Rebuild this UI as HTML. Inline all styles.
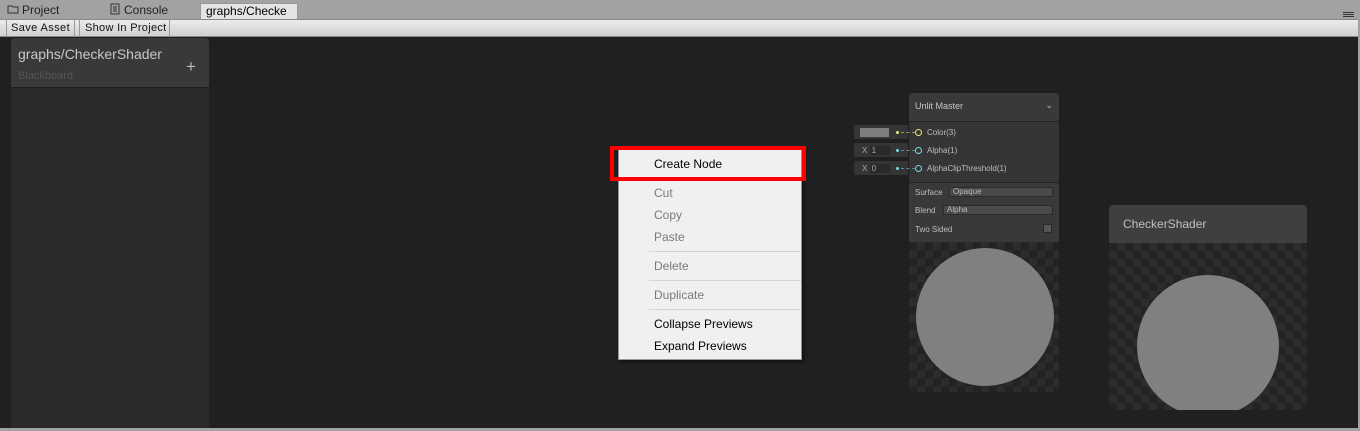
<!DOCTYPE html><html><head><style>
*{margin:0;padding:0;box-sizing:border-box}
body{width:1360px;height:431px;overflow:hidden;background:#a2a2a2;font-family:"Liberation Sans","DejaVu Sans",sans-serif;position:relative}
.a{position:absolute}
.t{font-size:12px;color:#000}
.chk{background-color:#232323;background-image:linear-gradient(45deg,#2c2c2c 25%,transparent 25%,transparent 75%,#2c2c2c 75%),linear-gradient(45deg,#2c2c2c 25%,transparent 25%,transparent 75%,#2c2c2c 75%);background-size:16px 16px;background-position:0 0,8px 8px;overflow:hidden}
.m{position:absolute;left:35px;font-size:12px;color:#000}
.d{color:#7a7a7a}
.sep{position:absolute;left:30px;width:152px;height:1px;background:#d5d5d5}
.nt{font-size:8px;color:#bdbdbd;position:absolute}
</style></head><body>
<svg class="a" style="left:7px;top:4px" width="12" height="10"><path d="M1 2h4l1 1h5v6H1z" fill="none" stroke="#333"/></svg>
<div class="a t" style="left:22px;top:3px;color:#222">Project</div>
<svg class="a" style="left:110px;top:3px" width="10" height="12"><rect x="1" y="1" width="8" height="10" fill="none" stroke="#333"/><path d="M3 4h4M3 6h4M3 8h4" stroke="#333"/></svg>
<div class="a t" style="left:124px;top:3px;color:#222">Console</div>
<div class="a" style="left:200px;top:3px;width:98px;height:17px;background:#e4e4e4;border:1px solid #999;border-bottom:none"></div>
<div class="a t" style="left:206px;top:4px;font-size:12px">graphs/Checke</div>
<div class="a" style="left:1343px;top:12px;width:11px;height:1px;background:#333;box-shadow:0 2px #333,0 4px #333"></div>
<div class="a" style="left:0;top:19px;width:1358px;height:18px;background:linear-gradient(#ececec,#cfcfcf);border-top:1px solid #888;border-bottom:1px solid #888"></div>
<div class="a" style="left:6px;top:19px;width:69px;height:18px;border-left:1px solid #999;border-right:1px solid #999"></div>
<div class="a" style="left:79px;top:19px;width:91px;height:18px;border-left:1px solid #999;border-right:1px solid #999"></div>
<div class="a" style="left:11px;top:22px;font-size:11px;letter-spacing:.4px;color:#111">Save Asset</div>
<div class="a" style="left:85px;top:22px;font-size:11px;letter-spacing:.3px;color:#111">Show In Project</div>
<div class="a" style="left:0;top:37px;width:1358px;height:391px;background:#202020"></div>
<div class="a" style="left:11px;top:38px;width:198px;height:390px;background:#2b2b2b;border-radius:4px 4px 0 0"></div>
<div class="a" style="left:11px;top:38px;width:198px;height:50px;background:#393939;border-radius:4px 4px 0 0;border-bottom:1px solid #1e1e1e"></div>
<div class="a" style="left:18px;top:46px;font-size:14px;color:#c8c8c8">graphs/CheckerShader</div>
<div class="a" style="left:18px;top:70px;font-size:11px;color:#555">Blackboard</div>
<div class="a" style="left:186px;top:57px;font-size:17px;color:#bbb">+</div>
<!-- master node -->
<div class="a" style="left:908px;top:92px;width:152px;height:301px;background:#393939;border-radius:4px;border:1px solid #1e1e1e;overflow:hidden">
<div class="nt" style="left:6px;top:8px;font-size:9px;color:#c4c4c4">Unlit Master</div>
<div class="nt" style="right:6px;top:7px;font-size:9px">&#8964;</div>
<div class="a" style="left:0;top:28px;width:152px;height:1px;background:#222"></div>
<div class="a" style="left:0;top:29px;width:152px;height:60px;background:#353535"></div>
<div class="nt" style="left:18px;top:35px">Color(3)</div>
<div class="nt" style="left:18px;top:53px">Alpha(1)</div>
<div class="nt" style="left:18px;top:71px">AlphaClipThreshold(1)</div>
<div class="a" style="left:6px;top:36px;width:7px;height:7px;border-radius:50%;border:1px solid #e6e67a"></div>
<div class="a" style="left:6px;top:54px;width:7px;height:7px;border-radius:50%;border:1px solid #79d8e2"></div>
<div class="a" style="left:6px;top:72px;width:7px;height:7px;border-radius:50%;border:1px solid #79d8e2"></div>
<div class="a" style="left:0;top:89px;width:152px;height:1px;background:#222"></div>
<div class="nt" style="left:6px;top:95px">Surface</div>
<div class="a" style="left:40px;top:94px;width:104px;height:10px;background:#4a4a4a;border:1px solid #2a2a2a;border-radius:2px;font-size:8px;color:#bbb;padding-left:3px;line-height:8px">Opaque</div>
<div class="nt" style="left:6px;top:113px">Blend</div>
<div class="a" style="left:34px;top:112px;width:110px;height:10px;background:#4a4a4a;border:1px solid #2a2a2a;border-radius:2px;font-size:8px;color:#bbb;padding-left:3px;line-height:8px">Alpha</div>
<div class="nt" style="left:6px;top:132px">Two Sided</div>
<div class="a" style="left:134px;top:131px;width:9px;height:9px;background:#555;border:1px solid #2a2a2a"></div>
<div class="a chk" style="left:0;top:149px;width:152px;height:152px"><div class="a" style="left:7px;top:6px;width:138px;height:138px;border-radius:50%;background:#808080"></div></div>
</div>
<!-- inputs -->
<div class="a" style="left:854px;top:125px;width:54px;height:14px;background:#353535"></div>
<div class="a" style="left:860px;top:128px;width:29px;height:9px;background:#7f7f7f"></div>
<div class="a" style="left:854px;top:143px;width:54px;height:14px;background:#353535"></div>
<div class="a" style="left:854px;top:161px;width:54px;height:14px;background:#353535"></div>
<div class="a" style="left:862px;top:146px;font-size:8px;color:#aaa">X <span style="background:#2a2a2a;padding:0 14px 0 2px">1</span></div>
<div class="a" style="left:862px;top:164px;font-size:8px;color:#aaa">X <span style="background:#2a2a2a;padding:0 14px 0 2px">0</span></div>
<div class="a" style="left:896px;top:131px;width:3px;height:3px;background:#e6e67a;border-radius:50%"></div>
<div class="a" style="left:896px;top:149px;width:3px;height:3px;background:#79d8e2;border-radius:50%"></div>
<div class="a" style="left:896px;top:167px;width:3px;height:3px;background:#79d8e2;border-radius:50%"></div>
<div class="a" style="left:901px;top:132px;width:14px;border-top:1px dashed #9a9a50"></div>
<div class="a" style="left:901px;top:150px;width:14px;border-top:1px dashed #4f8f96"></div>
<div class="a" style="left:901px;top:168px;width:14px;border-top:1px dashed #4f8f96"></div>
<!-- checker node -->
<div class="a" style="left:1109px;top:205px;width:198px;height:205px;border-radius:4px;overflow:hidden;background:#2a2a2a">
<div class="a" style="left:0;top:0;width:198px;height:38px;background:#3f3f3f"></div>
<div class="a" style="left:14px;top:12px;font-size:12px;color:#c0c0c0">CheckerShader</div>
<div class="a chk" style="left:0;top:38px;width:198px;height:167px"><div class="a" style="left:28px;top:32px;width:142px;height:142px;border-radius:50%;background:#808080"></div></div>
</div>
<!-- context menu -->
<div class="a" style="left:618px;top:148px;width:184px;height:212px;background:#f0f0f0;border:1px solid #979797;box-shadow:2px 2px 3px rgba(0,0,0,.5)">
<div class="m" style="top:8px">Create Node</div>
<div class="m d" style="top:37px">Cut</div>
<div class="m d" style="top:59px">Copy</div>
<div class="m d" style="top:81px">Paste</div>
<div class="sep" style="top:102px"></div>
<div class="m d" style="top:110px">Delete</div>
<div class="sep" style="top:131px"></div>
<div class="m d" style="top:139px">Duplicate</div>
<div class="sep" style="top:160px"></div>
<div class="m" style="top:168px">Collapse Previews</div>
<div class="m" style="top:190px">Expand Previews</div>
</div>
<div class="a" style="left:610px;top:146px;width:196px;height:35px;border:4px solid #f00"></div>
</body></html>
